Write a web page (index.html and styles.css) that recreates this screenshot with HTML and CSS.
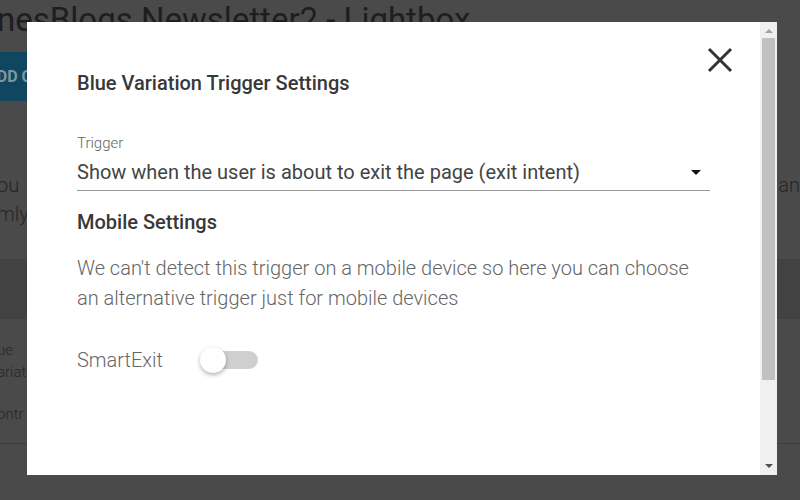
FILE: index.html
```html
<!DOCTYPE html>
<html lang="en">
<head>
  <meta charset="UTF-8" />
  <meta name="viewport" content="width=device-width, initial-scale=1.0"/>
  <title>Blue Variation Trigger Settings</title>
  <link rel="stylesheet" href="styles.css">
</head>
<body>
  <div class="page">
    <h1 class="page-title">nesBlogs Newsletter2 - Lightbox</h1>
    <button class="add-btn">ADD CAMPAIGN</button>
    <div class="intro">
      <p class="intro-line"><span>ou</span><span>an</span></p>
      <p class="intro-line"><span>mly</span></p>
    </div>
    <div class="table-head"></div>
    <div class="table-row">
      <p>ue<br>ariat</p>
      <p>ontr</p>
    </div>
  </div>

  <div class="overlay">
    <div class="modal">
      <div class="modal-body">
        <button class="close-btn" aria-label="Close">
          <svg width="26" height="26" viewBox="0 0 26 26">
            <path d="M2 2 L24 24 M24 2 L2 24" stroke="#333" stroke-width="3" fill="none"/>
          </svg>
        </button>

        <h2 class="modal-title">Blue Variation Trigger Settings</h2>

        <label class="field-label" for="trigger">Trigger</label>
        <div class="select" id="trigger">
          <span>Show when the user is about to exit the page (exit intent)</span>
          <span class="caret"></span>
        </div>

        <h3 class="section-title">Mobile Settings</h3>
        <p class="section-text">We can't detect this trigger on a mobile device so here you can choose an alternative trigger just for mobile devices</p>

        <div class="toggle-row">
          <span class="toggle-label">SmartExit</span>
          <span class="toggle">
            <span class="toggle-knob"></span>
          </span>
        </div>
      </div>

      <div class="scrollbar">
        <span class="arrow arrow-up"></span>
        <span class="thumb"></span>
        <span class="track"></span>
        <span class="arrow arrow-down"></span>
      </div>
    </div>
  </div>
</body>
</html>
```

FILE: styles.css
```css
:root {
  --backdrop: #4a4a4a;
  --text: #383838;
  --muted: #666;
  --line: #999;
  --light: "Roboto Light", Roboto, "Open Sans", sans-serif;
}

body {
  margin: 0;
  font-family: Roboto, "Open Sans", sans-serif;
  background-color: var(--backdrop);
  color: #1c1c1c;
  overflow: hidden;
}

/* Page behind the lightbox (already dimmed) */
.page {
  height: 500px;
  display: flex;
  flex-direction: column;
}

.page-title {
  margin: -2px 0 0 -3px;
  font-size: 33px;
  font-weight: 400;
  line-height: 44px;
  color: #1e1e1e;
  white-space: nowrap;
}

.add-btn {
  align-self: flex-start;
  margin: 10px 0 0 -34px;
  height: 49px;
  padding: 0 20px;
  border: none;
  background: #0e475f;
  color: #8096a2;
  font-family: inherit;
  font-size: 16px;
  font-weight: 700;
}

.intro {
  margin-top: 70px;
}

.intro-line {
  display: flex;
  justify-content: space-between;
  margin: 0;
  font-family: var(--light);
  font-size: 20px;
  font-weight: 300;
  line-height: 29px;
  color: #262626;
}

.intro-line span:first-child {
  margin-left: -3px;
}

.table-head {
  margin-top: 30px;
  height: 60px;
  background: #424242;
}

.table-row {
  height: 124px;
  border-bottom: 1px solid #3d3d3d;
  font-family: var(--light);
  font-size: 15px;
  font-weight: 300;
  color: #262626;
}

.table-row p {
  margin: 20px 0 0 -3px;
  line-height: 22px;
}

.table-row p + p {
  margin-top: 20px;
}

/* Lightbox */
.overlay {
  position: fixed;
  inset: 0;
  display: flex;
  align-items: flex-start;
  padding: 22px 0 0 27px;
}

.modal {
  width: 750px;
  height: 453px;
  background: #fff;
  display: flex;
}

.modal-body {
  position: relative;
  flex: 1;
  padding: 49px 50px 0 50px;
  color: var(--text);
}

.close-btn {
  position: absolute;
  top: 25px;
  right: 27px;
  padding: 0;
  border: none;
  background: none;
  width: 26px;
  height: 26px;
}

.modal-title,
.section-title {
  margin: 0;
  font-size: 20px;
  font-weight: 500;
  line-height: 24px;
  color: var(--text);
}

.field-label {
  display: block;
  margin-top: 40px;
  font-family: var(--light);
  font-size: 15px;
  font-weight: 300;
  line-height: 16px;
  color: var(--muted);
}

.select {
  display: flex;
  justify-content: space-between;
  align-items: center;
  margin-top: 7px;
  padding-bottom: 4px;
  border-bottom: 1px solid var(--line);
  font-size: 20px;
  line-height: 28px;
  color: #444;
}

.caret {
  width: 0;
  height: 0;
  margin-right: 9px;
  border-left: 5px solid transparent;
  border-right: 5px solid transparent;
  border-top: 5px solid #111;
}

.section-title {
  margin-top: 19px;
}

.section-text {
  margin: 19px 0 0;
  font-family: var(--light);
  font-size: 20px;
  font-weight: 300;
  line-height: 30px;
  color: var(--muted);
}

.toggle-row {
  display: flex;
  align-items: center;
  height: 30px;
  margin-top: 32px;
}

.toggle-label {
  width: 124px;
  font-family: var(--light);
  font-size: 20px;
  font-weight: 300;
  color: var(--muted);
}

.toggle {
  position: relative;
  display: flex;
  align-items: center;
  width: 55px;
  height: 18px;
  margin-left: 2px;
  border-radius: 9px;
  background: #cfcfcf;
}

.toggle-knob {
  position: absolute;
  left: -3px;
  top: -4px;
  width: 26px;
  height: 26px;
  border-radius: 50%;
  background: #fff;
  box-shadow: 0 2px 4px rgba(0, 0, 0, 0.3);
}

/* Scrollbar strip */
.scrollbar {
  width: 17px;
  display: flex;
  flex-direction: column;
  align-items: center;
  background: #f0f0f0;
}

.arrow {
  width: 0;
  height: 0;
  border-left: 4px solid transparent;
  border-right: 4px solid transparent;
}

.arrow-up {
  margin: 7px 0 5px;
  border-bottom: 4px solid #a3a3a3;
}

.thumb {
  width: 13px;
  height: 342px;
  background: #c1c1c1;
}

.track {
  flex: 1;
}

.arrow-down {
  margin: 5px 0 7px;
  border-top: 4px solid #505050;
}
```
